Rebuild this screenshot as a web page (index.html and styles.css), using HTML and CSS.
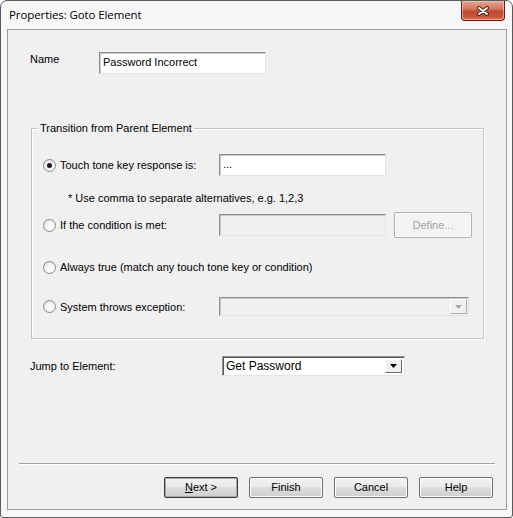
FILE: index.html
```html
<!DOCTYPE html>
<html>
<head>
<meta charset="utf-8">
<link rel="stylesheet" href="styles.css">
</head>
<body>
<div class="window">
  <div class="titlebar">
    <span class="title">Properties: Goto Element</span>
    <div class="close"><svg width="14" height="10" viewBox="0 0 14 10"><path d="M3 2 L11 8 M11 2 L3 8" stroke="#4a1a12" stroke-width="3.8" stroke-linecap="round"/><path d="M3 2 L11 8 M11 2 L3 8" stroke="#ffffff" stroke-width="2" stroke-linecap="round"/></svg></div>
  </div>
  <div class="client">
    <div class="name-row">
      <span class="name-label">Name</span>
      <div class="textbox name-box">Password Incorrect</div>
    </div>

    <div class="group">
      <span class="legend">Transition from Parent Element</span>
      <div class="row row1">
        <div class="opt"><span class="radio checked"></span><span>Touch tone key response is:</span></div>
        <div class="textbox field">...</div>
      </div>
      <div class="hint">* Use comma to separate alternatives, e.g. 1,2,3</div>
      <div class="row row2">
        <div class="opt"><span class="radio"></span><span>If the condition is met:</span></div>
        <div class="textbox field disabled"></div>
        <div class="btn define">Define...</div>
      </div>
      <div class="row row3">
        <div class="opt wide"><span class="radio"></span><span>Always true (match any touch tone key or condition)</span></div>
      </div>
      <div class="row row4">
        <div class="opt"><span class="radio"></span><span>System throws exception:</span></div>
        <div class="combo disabled-combo"><span class="combo-text"></span><span class="arrow dis"><svg width="7" height="4" viewBox="0 0 7 4"><path d="M0 0 H7 L3.5 4 Z" fill="#a8a8a8"/></svg></span></div>
      </div>
    </div>

    <div class="jump-row">
      <span class="jump-label">Jump to Element:</span>
      <div class="combo jump-combo"><span class="combo-text">Get Password</span><span class="arrow"><svg width="7" height="4" viewBox="0 0 7 4"><path d="M0 0 H7 L3.5 4 Z" fill="#000"/></svg></span></div>
    </div>

    <div class="footer">
      <div class="separator"></div>
      <div class="buttons">
        <div class="btn default"><u>N</u>ext &gt;</div>
        <div class="btn">Finish</div>
        <div class="btn">Cancel</div>
        <div class="btn">Help</div>
      </div>
    </div>
  </div>
</div>
</body>
</html>
```

FILE: styles.css
```css
* { box-sizing: border-box; }
html, body { margin: 0; padding: 0; background: #ffffff; }
body { width: 513px; height: 518px; overflow: hidden; }

.window {
  width: 513px;
  height: 518px;
  border: 1px solid #5b5b5b;
  border-radius: 7px 7px 3px 3px;
  background: #f6f7f8;
  padding: 0 5px 7px 6px;
  display: flex;
  flex-direction: column;
  font-family: "Liberation Sans", Arial, sans-serif;
  font-size: 11px;
  color: #000;
}

.titlebar {
  height: 28px;
  flex: none;
  display: flex;
  align-items: flex-start;
  justify-content: space-between;
}
.title {
  font-family: "Open Sans", "Noto Sans", sans-serif;
  font-size: 11.5px;
  color: #000;
  margin-top: 6px;
  margin-left: 2px;
  letter-spacing: -0.1px;
}
.close {
  width: 44px;
  height: 20px;
  margin-right: 2px;
  border: 1px solid #6b1f16;
  border-top: none;
  border-radius: 0 0 4px 4px;
  background: linear-gradient(#e8a493 0%, #d9785f 40%, #c24a2e 55%, #c8553a 85%, #e0846b 100%);
  box-shadow: inset 0 0 0 1px rgba(255,210,200,0.55);
  display: flex;
  align-items: center;
  justify-content: center;
}

.client {
  flex: 1;
  border: 1px solid #9c9c9c;
  background: #f0f0f0;
  display: flex;
  flex-direction: column;
}

.name-row {
  display: flex;
  margin-top: 22px;
  padding-left: 22px;
}
.name-label { width: 69px; padding-top: 1px; }

.textbox {
  height: 22px;
  background: #fff;
  border: 1px solid;
  border-color: #8f8f8f #e4e4e4 #e4e4e4 #8f8f8f;
  box-shadow: inset 1px 1px 0 #c8c8c8;
  padding: 3px 3px 0 3px;
  white-space: nowrap;
}
.name-box { width: 167px; }

.group {
  position: relative;
  margin: 54px 0 0 23px;
  width: 453px;
  height: 211px;
  border: 1px solid #c4c4c4;
  box-shadow: 1px 1px 0 #ffffff, inset 1px 1px 0 #ffffff;
  display: flex;
  flex-direction: column;
  padding-left: 11px;
}
.legend {
  position: absolute;
  top: -8px;
  left: 6px;
  background: #f0f0f0;
  padding: 0 2px;
  line-height: 14px;
}

.row { display: flex; align-items: center; }
.opt { width: 176px; display: flex; align-items: center; white-space: nowrap; }
.opt.wide { width: auto; }
.opt .radio { margin-right: 4px; }

.row1 { height: 22px; margin-top: 25px; }
.hint { height: 14px; line-height: 14px; margin-top: 15px; padding-left: 25px; }
.row2 { height: 26px; margin-top: 7px; }
.row3 { height: 14px; margin-top: 22px; }
.row4 { height: 19px; margin-top: 23px; }

.field { width: 167px; }
.disabled { background: #f0f0f0; }

.radio {
  width: 13px;
  height: 13px;
  flex: none;
  border-radius: 50%;
  border: 1px solid #8a8a8a;
  background: radial-gradient(circle at 60% 65%, #ffffff 0%, #f4f4f4 50%, #d6d6d6 100%);
  position: relative;
}
.radio.checked::after {
  content: "";
  position: absolute;
  left: 3px;
  top: 3px;
  width: 5px;
  height: 5px;
  border-radius: 50%;
  background: #1a1a1a;
}

.btn {
  height: 21px;
  width: 74px;
  border: 1px solid #707070;
  border-radius: 2px;
  background: linear-gradient(#f2f2f2 0%, #ebebeb 45%, #dddddd 50%, #cfcfcf 100%);
  box-shadow: inset 0 0 0 1px #fcfcfc;
  display: flex;
  align-items: center;
  justify-content: center;
  line-height: 1;
}
.btn.default { border-color: #3c3c3c; box-shadow: inset 0 0 0 1px #a8a8a8; }
.btn.define {
  width: 78px;
  height: 26px;
  margin-left: 8px;
  color: #a3a3a3;
  border-color: #adb2b5;
  background: #f4f4f4;
  box-shadow: inset 0 0 0 1px #fbfbfb;
}

.combo {
  display: flex;
  background: #fff;
  border: 1px solid;
  border-color: #8f8f8f #e4e4e4 #e4e4e4 #8f8f8f;
  box-shadow: inset 1px 1px 0 #5a5a5a;
  padding: 2px;
}
.combo-text { flex: 1; padding-left: 1px; font-size: 12px; line-height: 15px; }
.arrow {
  width: 17px;
  flex: none;
  background: #f0f0f0;
  border: 1px solid;
  border-color: #ffffff #6a6a6a #6a6a6a #ffffff;
  display: flex;
  align-items: center;
  justify-content: center;
}
.disabled-combo {
  width: 250px;
  height: 19px;
  background: #f0f0f0;
  box-shadow: inset 1px 1px 0 #c8c8c8;
  padding: 1px;
}
.arrow.dis { border-color: #ffffff #b0b0b0 #b0b0b0 #ffffff; }

.jump-row {
  display: flex;
  align-items: center;
  margin-top: 17px;
  padding-left: 22px;
  height: 20px;
}
.jump-label { width: 192px; }
.jump-combo { width: 183px; height: 20px; }

.footer { margin-top: auto; padding-bottom: 11px; }
.separator {
  margin: 0 11px;
  height: 2px;
  border-top: 1px solid #a0a0a0;
  border-bottom: 1px solid #ffffff;
}
.buttons {
  display: flex;
  gap: 11px;
  margin-top: 12px;
  padding-left: 156px;
}
```
